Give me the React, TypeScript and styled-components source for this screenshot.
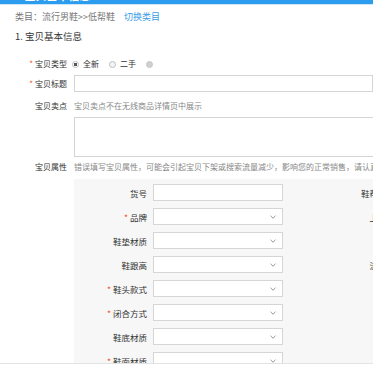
import React from "react";
import styled, { createGlobalStyle } from "styled-components";

const GlobalStyle = createGlobalStyle`
  html, body { margin: 0; padding: 0; background: #fff; overflow: hidden; }
  body { font-family: "Noto Sans CJK SC", "Noto Sans", sans-serif; color: #333; }
`;

const Page = styled.div`
  width: 373px;
  height: 374px;
  overflow: hidden;
  position: relative;
`;

const Header = styled.div`
  margin-top: -17px;
  height: 22px;
  box-sizing: border-box;
  padding: 6px 0 0 12px;
  background: #2b9cee;
  border-bottom: 1px solid #cfe6fa;
  color: #fff;
  font-size: 11px;
  font-weight: bold;
  line-height: 12px;
`;

const Crumb = styled.div`
  margin: 6px 0 0 15px;
  font-size: 9px;
  line-height: 12px;
  color: #777;
`;

const Link = styled.a`
  color: #3a9de6;
  margin-left: 9px;
  text-decoration: none;
`;

const SectionTitle = styled.div`
  margin: 7px 0 0 15px;
  font-size: 9.5px;
  line-height: 12px;
  color: #333;
`;

const Row = styled.div<{ $mt: number }>`
  display: flex;
  align-items: center;
  margin-top: ${(p) => p.$mt}px;
  padding-left: 15px;
`;

const Label = styled.div`
  width: 52px;
  flex-shrink: 0;
  margin-right: 7px;
  text-align: right;
  font-size: 8px;
  line-height: 12px;
  color: #333;
  white-space: nowrap;
`;

const Star = styled.span`
  color: #f2552c;
  margin-right: 2px;
`;

const RadioGroup = styled.div`
  display: flex;
  align-items: center;
  margin-left: -2px;
  font-size: 8px;
  line-height: 12px;
  color: #333;
`;

const Radio = styled.span<{ $state: "on" | "off" | "disabled" }>`
  width: 7px;
  height: 7px;
  box-sizing: border-box;
  border-radius: 50%;
  border: 1px solid ${(p) => (p.$state === "disabled" ? "#c8c8c8" : "#bdbdbd")};
  background: ${(p) =>
    p.$state === "on"
      ? "radial-gradient(circle, #555 0 1.6px, #fff 2px)"
      : p.$state === "disabled"
      ? "#cfcfcf"
      : "#f3f3f3"};
  margin-right: 4px;
  flex-shrink: 0;
`;

const RadioText = styled.span`
  margin-right: 10px;
`;

const TextInput = styled.div`
  width: 420px;
  height: 17px;
  box-sizing: border-box;
  border: 1px solid #d4d4d4;
  background: #fff;
`;

const Hint = styled.span`
  font-size: 8px;
  line-height: 12px;
  color: #888;
  white-space: nowrap;
`;

const TextArea = styled.div`
  margin: 5px 0 0 74px;
  width: 420px;
  height: 40px;
  box-sizing: border-box;
  border: 1px solid #d4d4d4;
  background: #fff;
`;

const Panel = styled.div`
  margin: 6px 0 0 74px;
  width: 520px;
  background: #f7f7f7;
  padding: 5px 0 20px;
  display: grid;
  grid-template-columns: 209px 209px;
  column-gap: 39px;
  row-gap: 7px;
`;

const Field = styled.div`
  display: flex;
  align-items: center;
  height: 17px;
`;

const FieldLabel = styled.div`
  width: 73px;
  flex-shrink: 0;
  margin-right: 6px;
  text-align: right;
  font-size: 8.5px;
  line-height: 12px;
  color: #333;
  white-space: nowrap;
`;

const FieldBox = styled.div`
  width: 130px;
  height: 17px;
  box-sizing: border-box;
  border: 1px solid #d6d6d6;
  background: #fff;
  display: flex;
  align-items: center;
  justify-content: flex-end;
  padding-right: 6px;
`;

const Footer = styled.div`
  position: absolute;
  left: 0;
  right: 0;
  top: 363px;
  bottom: 0;
  background: #fff;
  border-top: 1px solid #e3e3e3;
`;

const Chevron = () => (
  <svg width="6" height="4" viewBox="0 0 6 4">
    <path d="M0.5 0.8 L3 3.2 L5.5 0.8" fill="none" stroke="#888" strokeWidth="0.9" />
  </svg>
);

type F = { label?: string; req?: boolean; kind?: "input" | "select"; empty?: boolean };

const fields: F[] = [
  { label: "货号", kind: "input" },
  { label: "鞋帮高度", kind: "select" },
  { label: "品牌", req: true, kind: "select" },
  { label: "上市季", kind: "select" },
  { label: "鞋垫材质", kind: "select" },
  { empty: true },
  { label: "鞋跟高", kind: "select" },
  { label: "流行元", kind: "select" },
  { label: "鞋头款式", req: true, kind: "select" },
  { empty: true },
  { label: "闭合方式", req: true, kind: "select" },
  { empty: true },
  { label: "鞋底材质", kind: "select" },
  { empty: true },
  { label: "鞋面材质", req: true, kind: "select" },
  { empty: true },
];

export default function App() {
  return (
    <Page>
      <GlobalStyle />
      <Header>1. 宝贝基本信息</Header>
      <Crumb>
        类目：流行男鞋&gt;&gt;低帮鞋<Link>切换类目</Link>
      </Crumb>
      <SectionTitle>1. 宝贝基本信息</SectionTitle>

      <Row $mt={16}>
        <Label>
          <Star>*</Star>宝贝类型
        </Label>
        <RadioGroup>
          <Radio $state="on" />
          <RadioText>全新</RadioText>
          <Radio $state="off" />
          <RadioText>二手</RadioText>
          <Radio $state="disabled" />
        </RadioGroup>
      </Row>

      <Row $mt={5}>
        <Label>
          <Star>*</Star>宝贝标题
        </Label>
        <TextInput />
      </Row>

      <Row $mt={8}>
        <Label>宝贝卖点</Label>
        <Hint>宝贝卖点不在无线商品详情页中展示</Hint>
      </Row>
      <TextArea />

      <Row $mt={4}>
        <Label>宝贝属性</Label>
        <Hint>错误填写宝贝属性，可能会引起宝贝下架或搜索流量减少，影响您的正常销售，请认真准确填写！</Hint>
      </Row>

      <Panel>
        {fields.map((f, i) =>
          f.empty ? (
            <Field key={i} />
          ) : (
            <Field key={i}>
              <FieldLabel>
                {f.req && <Star>*</Star>}
                {f.label}
              </FieldLabel>
              <FieldBox>{f.kind === "select" && <Chevron />}</FieldBox>
            </Field>
          )
        )}
      </Panel>
      <Footer />
    </Page>
  );
}
